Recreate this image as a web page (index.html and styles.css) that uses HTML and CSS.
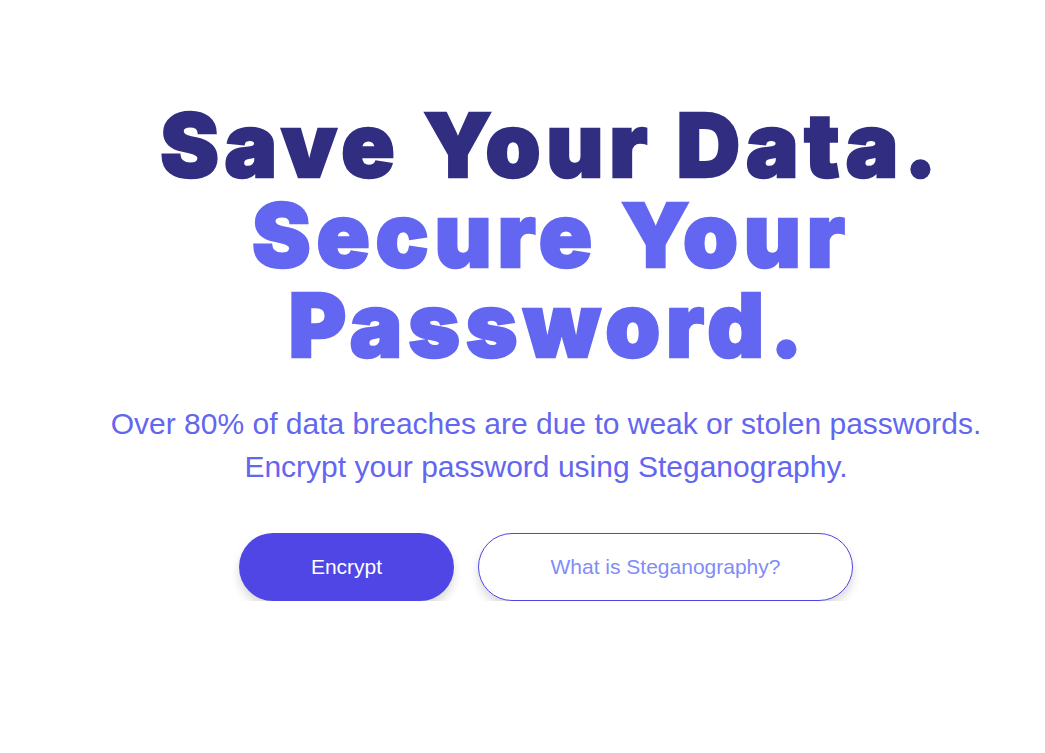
FILE: index.html
```html
<!DOCTYPE html>
<html lang="en">
<head>
<meta charset="utf-8">
<title>Save Your Data</title>
<link rel="stylesheet" href="styles.css">
</head>
<body>
<main class="hero">
  <h1 class="title">
    <span class="title-dark">Save Your Data.</span>
    <span class="title-light">Secure Your<br>Password.</span>
  </h1>
  <p class="lead">Over 80% of data breaches are due to weak or stolen passwords.<br>Encrypt your password using Steganography.</p>
  <div class="actions">
    <a class="btn btn-primary" href="#">Encrypt</a>
    <a class="btn btn-outline" href="#">What is Steganography?</a>
  </div>
</main>
</body>
</html>
```
FILE: styles.css
```css
* { box-sizing: border-box; }
html, body { margin: 0; padding: 0; background: #ffffff; }
body { font-family: "Liberation Sans", Arial, sans-serif; }

.hero {
  display: flex;
  flex-direction: column;
  align-items: center;
  padding: 100px 0 0 47px;
  text-align: center;
}

.title {
  margin: 0;
  padding-left: 5px;
  font-family: Inter, "Liberation Sans", sans-serif;
  font-size: 88px;
  line-height: 90px;
  font-weight: 900;
  letter-spacing: 5.8px;
  text-indent: 5.8px;
  -webkit-text-stroke: 2.5px currentColor;
}
.title-dark { display: block; color: #312e81; }
.title-light { display: block; color: #6366f1; }

.lead {
  margin: 32px 0 0;
  font-size: 30px;
  line-height: 43px;
  color: #6366f1;
}

.actions {
  display: flex;
  gap: 24px;
  margin-top: 45px;
}

.btn {
  display: flex;
  align-items: center;
  justify-content: center;
  height: 68px;
  border-radius: 34px;
  font-size: 21px;
  text-decoration: none;
  box-shadow: 0 6px 10px rgba(0, 0, 0, 0.15);
}
.btn-primary {
  width: 215px;
  background: #4f46e5;
  color: #ffffff;
}
.btn-outline {
  width: 375px;
  background: #ffffff;
  border: 1px solid #4f46e5;
  color: #818cf8;
}
```
